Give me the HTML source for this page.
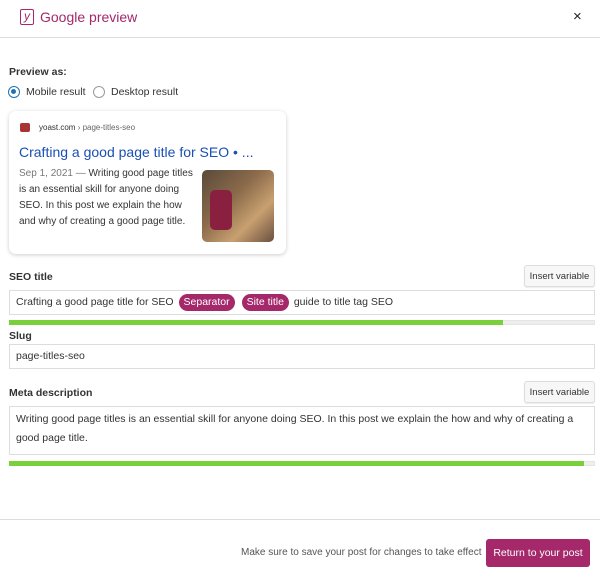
<!DOCTYPE html>
<html><head><style>
*{box-sizing:border-box;margin:0;padding:0}
body{width:600px;height:581px;background:#fff;font-family:"Liberation Sans",sans-serif;color:#1e1e1e;position:relative;overflow:hidden;font-size:11px}
.a{position:absolute}
.inp{position:absolute;left:9px;width:586px;border:1px solid #ddd;background:#fff;padding:0 6px;font-size:10.5px;color:#333}
.btn{position:absolute;left:524px;width:71px;height:22px;border:1px solid #ddd;border-radius:3px;background:#f7f7f7;font-size:9.5px;color:#333;text-align:center;line-height:21px;box-shadow:0 1px 1px rgba(0,0,0,.08);white-space:nowrap}
.pill{display:inline-block;background:#a4286a;color:#fff;border-radius:9px;padding:0 5px;height:17px;line-height:17px;margin:0 2px}
.lbl{position:absolute;left:9px;font-size:10.5px;font-weight:bold;color:#333}
</style></head><body>
<div class="a" style="left:20px;top:9px;width:14px;height:16px;border:1.5px solid #a4286a;border-radius:2px;color:#a4286a;font-size:12px;line-height:13px;text-align:center;font-style:italic">y</div>
<div class="a" style="left:40px;top:9px;font-size:14px;color:#a4286a">Google preview</div>
<div class="a" style="left:573px;top:8px;font-size:15px;color:#222">×</div>
<div class="a" style="left:0;top:37px;width:600px;height:1px;background:#ddd"></div>
<div class="lbl" style="top:66px">Preview as:</div>
<div class="a" style="left:8px;top:86px;width:12px;height:12px;border:1.5px solid #2271b1;border-radius:50%"><div style="margin:2px;width:5px;height:5px;border-radius:50%;background:#2271b1"></div></div>
<div class="a" style="left:26px;top:86px;font-size:10.5px;color:#333">Mobile result</div>
<div class="a" style="left:93px;top:86px;width:12px;height:12px;border:1px solid #999;border-radius:50%"></div>
<div class="a" style="left:111px;top:86px;font-size:10.5px;color:#333">Desktop result</div>
<div class="a" style="left:9px;top:111px;width:277px;height:143px;border-radius:7px;box-shadow:0 1px 4px rgba(0,0,0,.2);background:#fff"></div>
<div class="a" style="left:20px;top:123px;width:10px;height:9px;background:#a33;border-radius:2px"></div>
<div class="a" style="left:39px;top:123px;font-size:8px;color:#333">yoast.com <span style="color:#666">› page-titles-seo</span></div>
<div class="a" style="left:19px;top:144px;font-size:14px;color:#1a4fb3">Crafting a good page title for SEO • ...</div>
<div class="a" style="left:19px;top:166px;width:180px;font-size:10px;line-height:16px;color:#333;white-space:nowrap"><span style="color:#777">Sep 1, 2021 —</span> Writing good page titles<br>is an essential skill for anyone doing<br>SEO. In this post we explain the how<br>and why of creating a good page title.</div>
<div class="a" style="left:202px;top:170px;width:72px;height:72px;border-radius:5px;background:linear-gradient(135deg,#5a4a3a,#8a6a4a 40%,#c8a070 70%,#6a5040)"><div style="position:absolute;left:8px;top:20px;width:22px;height:40px;background:#8a2040;border-radius:5px"></div></div>
<div class="lbl" style="top:271px">SEO title</div>
<div class="btn" style="top:265px">Insert variable</div>
<div class="inp" style="top:290px;height:25px;line-height:23px">Crafting a good page title for SEO <span class="pill">Separator</span> <span class="pill">Site title</span> guide to title tag SEO</div>
<div class="a" style="left:9px;top:320px;width:586px;height:5px;background:#eee;border:1px solid #e4e4e4"></div>
<div class="a" style="left:9px;top:320px;width:494px;height:5px;background:#7ad03a"></div>
<div class="lbl" style="top:330px">Slug</div>
<div class="inp" style="top:344px;height:25px;line-height:23px">page-titles-seo</div>
<div class="lbl" style="top:387px">Meta description</div>
<div class="btn" style="top:381px">Insert variable</div>
<div class="inp" style="top:406px;height:49px;line-height:19px;padding-top:3px">Writing good page titles is an essential skill for anyone doing SEO. In this post we explain the how and why of creating a good page title.</div>
<div class="a" style="left:9px;top:461px;width:586px;height:5px;background:#eee;border:1px solid #e4e4e4"></div>
<div class="a" style="left:9px;top:461px;width:575px;height:5px;background:#7ad03a"></div>
<div class="a" style="left:0;top:519px;width:600px;height:1px;background:#ddd"></div>
<div class="a" style="left:241px;top:547px;font-size:10px;color:#555;white-space:nowrap">Make sure to save your post for changes to take effect</div>
<div class="a" style="left:486px;top:539px;width:104px;height:28px;background:#a4286a;border-radius:3px;color:#fff;font-size:10.5px;text-align:center;line-height:28px;white-space:nowrap">Return to your post</div>
</body></html>
